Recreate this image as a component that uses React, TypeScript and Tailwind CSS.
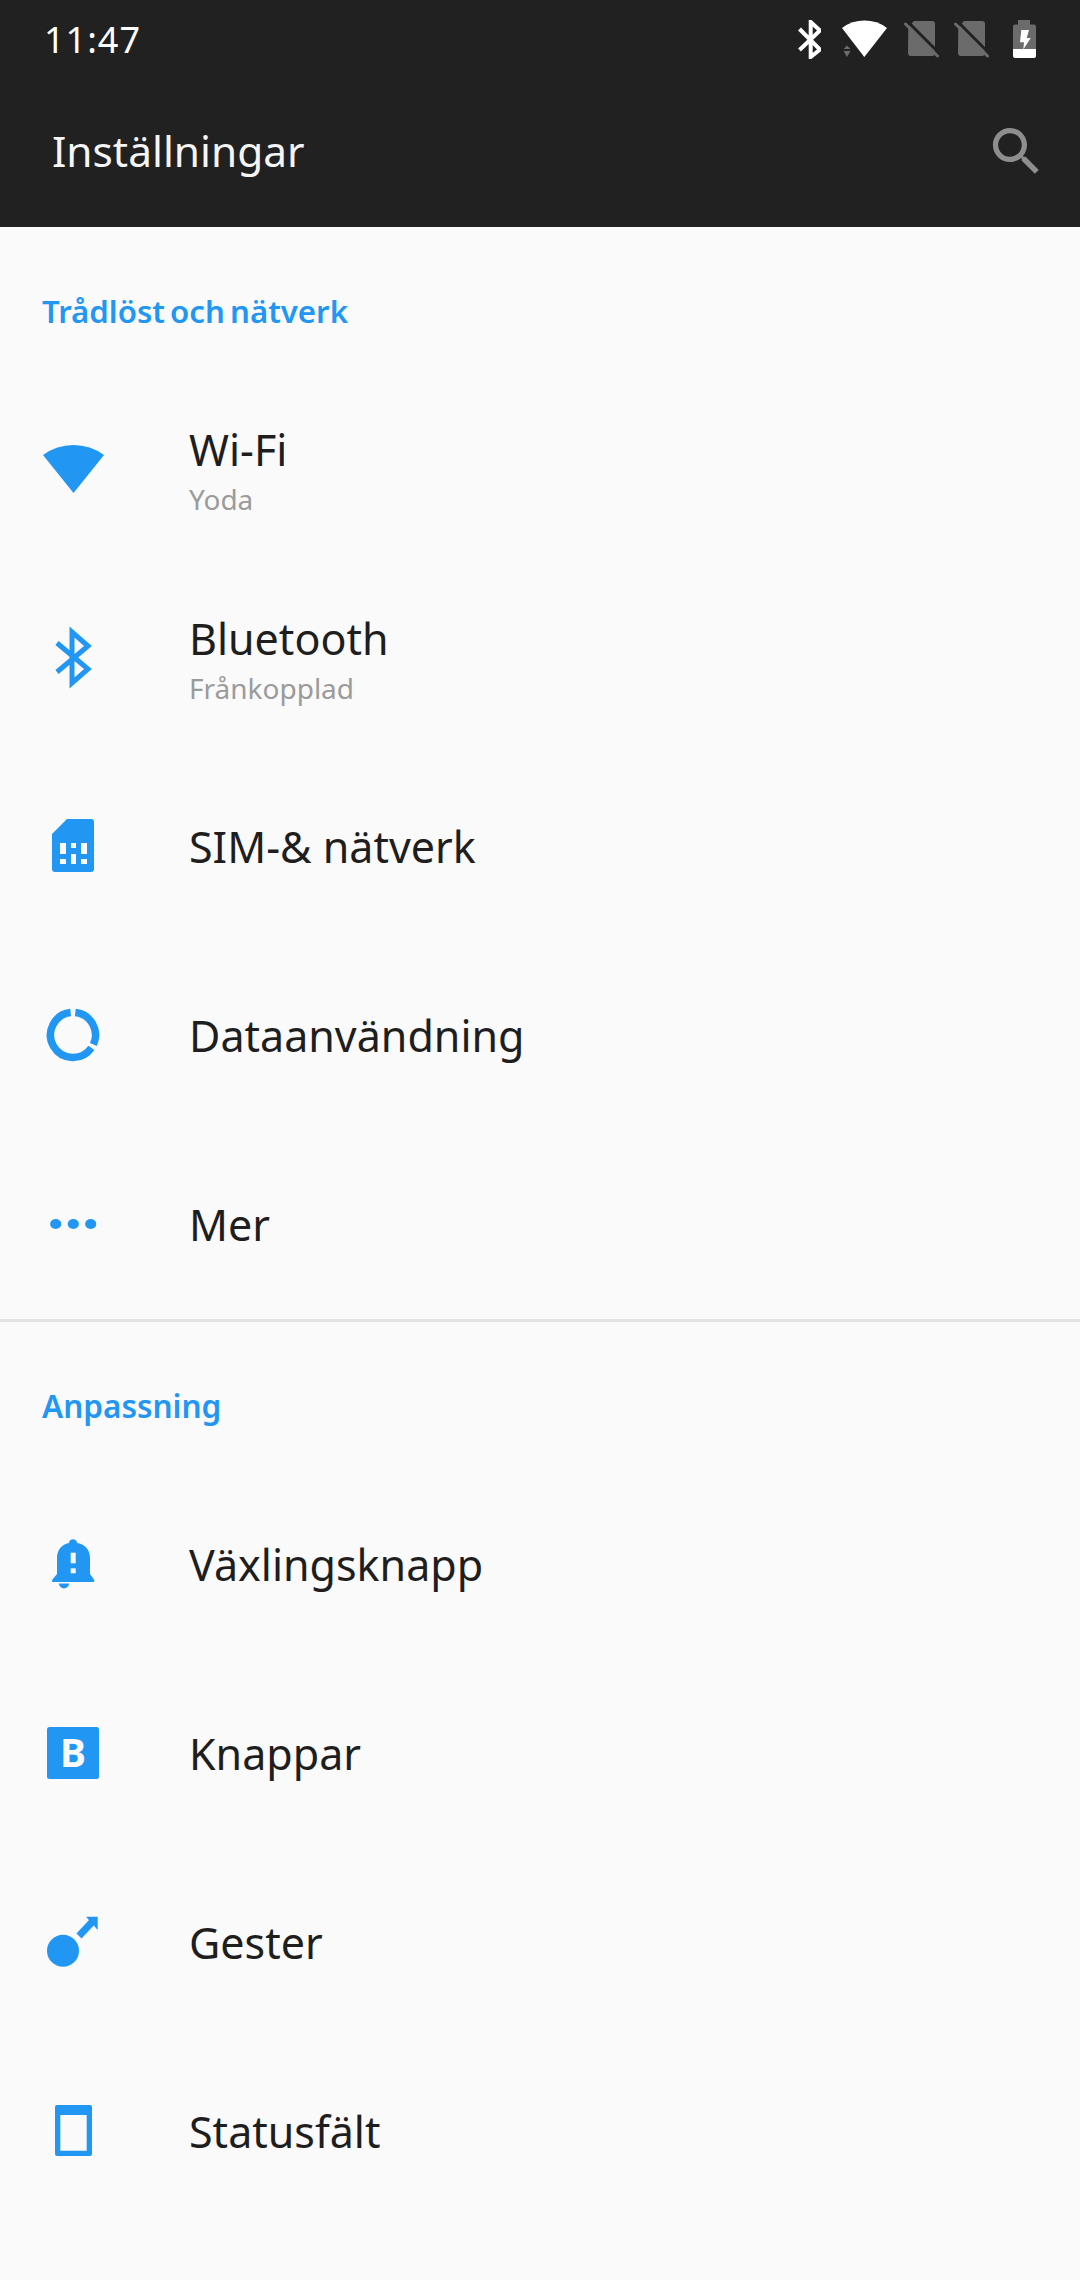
const BLUE = "#2196f3";

function SimOff() {
  return (
    <svg width="35" height="37" viewBox="0 0 35 37">
      <path d="M4.3 6 L10 0 H28 a3 3 0 0 1 3 3 V32 a3 3 0 0 1 -3 3 H7 a3 3 0 0 1 -3 -3 Z" fill="#6b6b6b" />
      <path d="M3 0 L36 33" stroke="#212121" strokeWidth="3" />
      <path d="M1.5 3 L33.5 35" stroke="#6b6b6b" strokeWidth="3" strokeLinecap="round" />
    </svg>
  );
}

function StatusIcons() {
  return (
    <div className="flex items-center pt-[2px]">
      <svg width="24" height="39" viewBox="0 0 24 39" className="mr-[20px]">
        <path d="M2.5 9 L23 29.5 L13.7 37 V2 L23 10.5 L2.5 30" fill="none" stroke="#fff" strokeWidth="4" />
      </svg>
      <svg width="47" height="40" viewBox="0 0 47 40" className="mr-[16px]">
        <path d="M1 9 A38 38 0 0 1 46 9 L23.3 38 Z" fill="#fff" />
        <path d="M6 26.5 L9.5 30 H2.5 Z M2.5 32 H9.5 L6 38 Z" fill="#6b6b6b" />
      </svg>
      <div className="mr-[15px] flex">
        <SimOff />
      </div>
      <div className="mr-[24px] flex">
        <SimOff />
      </div>
      <svg width="23" height="39" viewBox="0 0 23 39">
        <path d="M5 0 H17 V4.5 H21 a2 2 0 0 1 2 2 V30 H0 V6.5 a2 2 0 0 1 2 -2 H5 Z" fill="#6b6b6b" />
        <path d="M0 29 H23 V36 a2 2 0 0 1 -2 2 H2 a2 2 0 0 1 -2 -2 Z" fill="#fff" />
        <path d="M8.3 10 H16 L13.7 18 H17.7 L10.3 29.5 L11 22.3 H7 Z" fill="#fff" />
      </svg>
    </div>
  );
}

function Icon({ children }: { children: React.ReactNode }) {
  return (
    <svg width="72" height="72" viewBox="0 0 72 72" className="shrink-0" fill={BLUE}>
      {children}
    </svg>
  );
}

const wifi = <path d="M6 23 A51.5 51.5 0 0 1 67 23 L36.5 61 Z" />;

const bluetooth = (
  <path d="M20 22 L51 48 L35 62 V11 L51 25 L20 51" fill="none" stroke={BLUE} strokeWidth="5" />
);

const sim = (
  <>
    <path d="M15 24 L30 9 H54 a3 3 0 0 1 3 3 V59 a3 3 0 0 1 -3 3 H18 a3 3 0 0 1 -3 -3 Z" />
    <g fill="#fafafa">
      <rect x="23" y="33" width="6" height="11" />
      <rect x="23" y="49" width="6" height="5" />
      <rect x="34" y="33" width="5" height="5" />
      <rect x="34" y="44" width="5" height="10" />
      <rect x="44" y="33" width="6" height="11" />
      <rect x="44" y="49" width="6" height="5" />
    </g>
  </>
);

const data = (
  <g fill="none" stroke={BLUE} strokeWidth="7.5">
    <path d="M38.35 13.6 A22.5 22.5 0 0 1 56.4 45.5" />
    <path d="M54.4 48.9 A22.5 22.5 0 1 1 33.65 13.6" />
  </g>
);

const more = (
  <>
    <ellipse cx="18.7" cy="36" rx="5.6" ry="5" />
    <ellipse cx="36.3" cy="36" rx="5.6" ry="5" />
    <ellipse cx="53.7" cy="36" rx="5.6" ry="5" />
  </>
);

const bell = (
  <>
    <path d="M16 54 C15 54 14.5 52.5 15.5 51.5 L20 46 V30 C20 21 26 16 32 15 C32 10 40 10 40 15 C47 16 53 21 53 30 V46 L57 51.5 C58 52.5 57 54 56 54 Z" />
    <path d="M22 55.5 H32 A5 5 0 0 1 22 55.5 Z" />
    <rect x="33.7" y="24.7" width="5" height="10.6" fill="#fafafa" />
    <rect x="33.7" y="40.3" width="5" height="5" fill="#fafafa" />
  </>
);

const buttons = (
  <>
    <rect x="10" y="10" width="52" height="52" rx="2.5" />
    <text x="36" y="50" textAnchor="middle" fontSize="39" fontWeight="700" fill="#fafafa" className="font-['Noto_Sans']">
      B
    </text>
  </>
);

const gestures = (
  <>
    <circle cx="26" cy="44.7" r="16" />
    <path d="M42 30 L56 15" stroke={BLUE} strokeWidth="7" />
    <path d="M49 10.7 H60.7 V24 Z" />
  </>
);

const statusbar = (
  <path
    fillRule="evenodd"
    d="M20 10 H53 a2 2 0 0 1 2 2 V59 a2 2 0 0 1 -2 2 H20 a2 2 0 0 1 -2 -2 V12 a2 2 0 0 1 2 -2 Z M23.3 20 V55.7 H49.7 V20 Z"
  />
);

function Row({ icon, title, sub }: { icon: React.ReactNode; title: string; sub?: string }) {
  return (
    <div className="flex h-[189px] items-center pl-[37px]">
      {icon}
      <div className="ml-[80px] pt-[2px]">
        <div className="text-[43px] leading-[58px] text-[#1e1e1e]">{title}</div>
        {sub && <div className="mt-[2px] text-[28px] leading-[36px] text-[#9b9b9b]">{sub}</div>}
      </div>
    </div>
  );
}

export default function App() {
  return (
    <div className="h-[2280px] w-[1080px] overflow-hidden bg-[#fafafa] font-['Noto_Sans',sans-serif]">
      <div className="h-[227px] bg-[#212121]">
        <div className="flex h-[76px] items-center justify-between pl-[44px] pr-[44px]">
          <span className="pt-[3px] text-[36px] tracking-[1px] text-white">11:47</span>
          <StatusIcons />
        </div>
        <div className="flex h-[151px] items-center justify-between pl-[52px] pr-[32px]">
          <span className="pb-[2px] text-[42.4px] text-[#f5f5f5]">Inställningar</span>
          <svg width="63" height="63" viewBox="0 0 24 24" fill="#8e8e8e">
            <path d="M15.5 14h-.79l-.28-.27C15.41 12.59 16 11.11 16 9.5 16 5.91 13.09 3 9.5 3S3 5.91 3 9.5 5.91 16 9.5 16c1.61 0 3.09-.59 4.23-1.57l.27.28v.79l5 4.99L20.49 19l-4.99-5zm-6 0C7.01 14 5 11.99 5 9.5S7.01 5 9.5 5 14 7.01 14 9.5 11.99 14 9.5 14z" />
          </svg>
        </div>
      </div>

      <div className="flex h-[146px] items-start pl-[42px] pt-[64px]">
        <span className="text-[31.2px] font-semibold leading-[40px] text-[#2196f3] [word-spacing:-3px]">
          Trådlöst och nätverk
        </span>
      </div>
      <Row icon={<Icon>{wifi}</Icon>} title="Wi-Fi" sub="Yoda" />
      <Row icon={<Icon>{bluetooth}</Icon>} title="Bluetooth" sub="Frånkopplad" />
      <Row icon={<Icon>{sim}</Icon>} title="SIM-& nätverk" />
      <Row icon={<Icon>{data}</Icon>} title="Dataanvändning" />
      <Row icon={<Icon>{more}</Icon>} title="Mer" />

      <div className="mt-[1px] h-[3px] bg-[#e3e3e3]" />

      <div className="flex h-[147px] items-start pl-[42px] pt-[64px]">
        <span className="text-[31.5px] font-semibold leading-[40px] text-[#2196f3]">Anpassning</span>
      </div>
      <Row icon={<Icon>{bell}</Icon>} title="Växlingsknapp" />
      <Row icon={<Icon>{buttons}</Icon>} title="Knappar" />
      <Row icon={<Icon>{gestures}</Icon>} title="Gester" />
      <Row icon={<Icon>{statusbar}</Icon>} title="Statusfält" />
    </div>
  );
}
